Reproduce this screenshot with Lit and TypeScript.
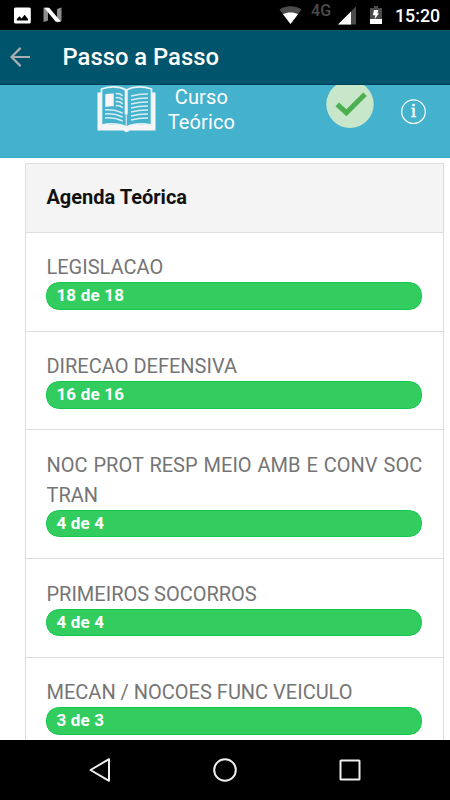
import { LitElement, html, css, svg } from "lit";
import { customElement } from "lit/decorators.js";

interface Lesson {
  name: string;
  done: number;
  total: number;
}

const lessons: Lesson[] = [
  { name: "LEGISLACAO", done: 18, total: 18 },
  { name: "DIRECAO DEFENSIVA", done: 16, total: 16 },
  { name: "NOC PROT RESP MEIO AMB E CONV SOC TRAN", done: 4, total: 4 },
  { name: "PRIMEIROS SOCORROS", done: 4, total: 4 },
  { name: "MECAN / NOCOES FUNC VEICULO", done: 3, total: 3 },
];

@customElement("status-bar")
class StatusBar extends LitElement {
  static styles = css`
    :host { display: flex; align-items: center; height: 30px; background: #000; color: #fff; box-sizing: border-box; padding: 0 11px 0 14px; }
    svg { display: block; flex: none; }
    .image { margin-right: 12px; }
    .spacer { flex: 1; }
    .net { font-size: 16px; line-height: 20px; color: #4b4b4b; margin: -8px 6px 0 9px; letter-spacing: 0.2px; width: 21px; font-weight: 500; }
    .battery { margin: 0 13px 0 14px; }
    .time { font-size: 17.8px; font-weight: 500; line-height: 30px; margin-top: 2px; width: 44px; white-space: nowrap; }
  `;
  render() {
    return html`
      <svg class="image" width="17" height="17" viewBox="0 0 17 17">
        <rect y="0.5" width="16.8" height="16" rx="1.5" fill="#fff" />
        <path d="M2.8 13.5V12L5.5 9.2 7.6 11.6 10.6 7.8 14 12V13.5z" fill="#000" />
      </svg>
      <svg width="19" height="16" viewBox="0 0 19 16">
        <path d="M0.5 0.8H5V13.5L0.5 15zM14 2 18.5 0.6V13.8L14 15.4z" fill="#8d8d8d" />
        <path d="M1.2 0.8H6.2L18 14.8H12.8z" fill="#fff" />
      </svg>
      <span class="spacer"></span>
      <svg width="23" height="18" viewBox="0 0 23 18">
        <path d="M11.5 18 0.5 3.6C6.5-0.8 16.5-0.8 22.5 3.6z" fill="#4b4b4b" />
        <path d="M11.5 18 4 8.2C8 5.8 15 5.8 19 8.2z" fill="#fff" />
      </svg>
      <span class="net">4G</span>
      <svg width="18" height="20" viewBox="0 0 18 20">
        <path d="M0 19.5 18 1.5V19.5z" fill="#4b4b4b" />
        <path d="M0 19.5 13 6.5V19.5z" fill="#fff" />
      </svg>
      <svg class="battery" width="12" height="18" viewBox="0 0 12 18">
        <path d="M0 2H4V0H8V2H12V13H0z" fill="#4b4b4b" />
        <path d="M0 13H12V18H0z" fill="#fff" />
        <path d="M4 4H8.5L7.3 7.2H9L4.7 13.3 5.3 9.2H2.8z" fill="#fff" />
      </svg>
      <span class="time">15:20</span>
    `;
  }
}

@customElement("course-banner")
class CourseBanner extends LitElement {
  static styles = css`
    :host { display: flex; align-items: flex-start; height: 73px; background: #44b1cd; color: #fff; box-sizing: border-box; border-bottom: 1px solid #2eaecb; padding-left: 97px; overflow: hidden; }
    svg { display: block; flex: none; }
    .book { margin-top: 1px; }
    .label { width: 90px; text-align: center; font-size: 20px; line-height: 25px; margin-left: 0.4px; letter-spacing: 0.1px; }
    .check { margin-left: 80px; margin-top: -6px; }
    .info { margin-left: 26.6px; margin-top: 14px; }
    .info-letter { font-family: "Liberation Serif", serif; font-size: 18px; fill: #fff; stroke: #fff; stroke-width: 0.6px; }
  `;
  private textLines(x: number, w: number, ys: number[], bend: number) {
    return ys.map((y) => svg`<path d="M${x} ${y}q${w / 2} ${bend < 0 ? -2.2 : -1} ${w} ${bend}" />`);
  }
  render() {
    return html`
      <svg class="book" width="59" height="47" viewBox="0 0 59 47">
        <path d="M0.5 6.5H4V39H55V6.5H58.5V44.5H32.5Q29.5 47.5 26.5 44.5H0.5z" fill="#f7f5f6" />
        <path d="M4.5 3Q19-1.5 29.2 4Q40-1.5 54.5 3V39Q40 36 29.5 41Q19 36 4.5 39z" fill="#44b1cd" stroke="#e9f3f6" stroke-width="1.7" />
        <path d="M29.2 4V28.5" stroke="#f7f5f6" stroke-width="3" />
        <path d="M29.2 28.5V41" stroke="#f7f5f6" stroke-width="1" />
        <path d="M8.3 8.3Q12 7.3 16.7 7.5V20.3Q12 20 8.3 21z" fill="#f7f5f6" />
        <g fill="none" stroke="#d8edf3" stroke-width="1.6">
          ${this.textLines(18.7, 7, [7.8, 11.8, 15.8, 19.8], 2)}
          ${this.textLines(8, 17.7, [24, 28, 32], 3)}
          ${this.textLines(34, 17, [10, 14, 18, 22, 26, 30, 34], -2)}
        </g>
      </svg>
      <span class="label">Curso<br />Teórico</span>
      <svg class="check" width="48" height="50" viewBox="0 0 48 50">
        <circle cx="24" cy="25.3" r="23.7" fill="#c8e6c9" />
        <path d="M11.2 25.3 20.4 33.7 39 15.3" fill="none" stroke="#4caf50" stroke-width="5" />
      </svg>
      <svg class="info" width="26" height="26" viewBox="0 0 26 26">
        <circle cx="12.5" cy="12.7" r="11.8" fill="none" stroke="#fff" stroke-width="1.2" />
        <text class="info-letter" x="12.5" y="18.2" text-anchor="middle">i</text>
      </svg>
    `;
  }
}

@customElement("lesson-row")
class LessonRow extends LitElement {
  static properties = { lesson: { attribute: false } };
  declare lesson: Lesson;
  static styles = css`
    :host { display: block; padding: 19.5px 20.8px 20.75px 20.2px; border-top: 1px solid #dddddd; }
    .name { font-size: 20px; line-height: 30px; color: #757575; text-align: justify; padding-left: 0.3px; }
    .track { height: 27.5px; border-radius: 12.5px; overflow: hidden; }
    .bar { height: 100%; box-sizing: border-box; background: #33cd5f; border: 1px solid #10c84b; border-radius: 12.5px; color: #fff; font-size: 17px; line-height: 25px; font-weight: 700; padding-left: 9.2px; letter-spacing: 0.2px; }
  `;
  render() {
    const { name, done, total } = this.lesson;
    return html`
      <div class="name">${name}</div>
      <div class="track"><div class="bar" style="width:${(done / total) * 100}%;">${done} de ${total}</div></div>
    `;
  }
}

@customElement("app-root")
class AppRoot extends LitElement {
  static styles = css`
    :host { display: flex; flex-direction: column; height: 800px; overflow: hidden; background: #fff; font-family: Roboto, "Liberation Sans", sans-serif; }
    status-bar, course-banner, .toolbar, .nav { flex: none; }
    .toolbar { display: flex; align-items: center; height: 55px; box-sizing: border-box; background: #00546b; border-bottom: 1px solid #004158; padding-left: 10px; color: #fff; }
    .title { margin: 0 0 0 32.5px; font-size: 23.8px; font-weight: 500; line-height: 30px; }
    .content { flex: 1; min-height: 0; overflow: hidden; padding: 5px 6px 0 25px; }
    .card { border: 1px solid #dddddd; border-bottom: 0; }
    .heading { margin: 0; height: 67.75px; line-height: 67px; padding-left: 20.4px; background: #f4f4f4; font-size: 20px; font-weight: 700; color: #111; }
    .nav { display: flex; justify-content: center; align-items: center; gap: 101px; height: 60px; background: #000; }
    svg { display: block; }
  `;
  render() {
    return html`
      <status-bar></status-bar>
      <header class="toolbar">
        <svg width="20" height="20" viewBox="0 0 20 20" fill="none" stroke="#a9aeb0" stroke-width="2.2">
          <path d="M20 10H2M10.6 0.9 1.5 10 10.6 19.1" />
        </svg>
        <h1 class="title">Passo a Passo</h1>
      </header>
      <course-banner></course-banner>
      <main class="content">
        <section class="card">
          <h2 class="heading">Agenda Teórica</h2>
          ${lessons.map((lesson) => html`<lesson-row .lesson=${lesson}></lesson-row>`)}
        </section>
      </main>
      <nav class="nav">
        <svg width="24" height="24" viewBox="0 0 24 24" fill="none" stroke="#eee" stroke-width="2" stroke-linejoin="round">
          <path d="M21 1.2V22.8L2.5 12z" />
        </svg>
        <svg width="24" height="24" viewBox="0 0 24 24" fill="none" stroke="#eee" stroke-width="2"><circle cx="12" cy="12" r="10.8" /></svg>
        <svg width="24" height="24" viewBox="0 0 24 24" fill="none" stroke="#eee" stroke-width="2"><rect x="2.5" y="2.5" width="19" height="19" rx="0.5" /></svg>
      </nav>
    `;
  }
}
